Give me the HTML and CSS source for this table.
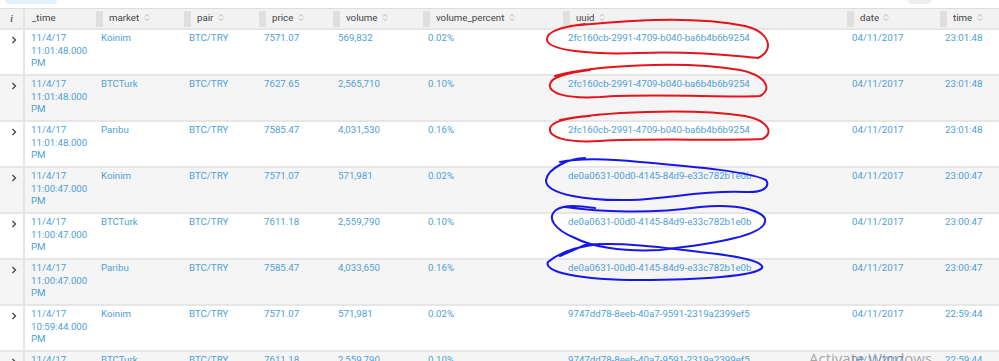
FILE: index.html
```html
<!DOCTYPE html>
<html lang="en">
<head>
    <meta charset="UTF-8">
    <title>Search results</title>
    <link rel="stylesheet" href="styles.css">
</head>
<body>
    <div class="toolbar">
        <span class="tab-active"></span>
        <span class="tab-btn"></span>
    </div>

    <table class="results">
        <colgroup>
            <col style="width:25px">
            <col style="width:71px">
            <col style="width:88px">
            <col style="width:75px">
            <col style="width:74px">
            <col style="width:90px">
            <col style="width:140px">
            <col style="width:284px">
            <col style="width:93px">
            <col style="width:59px">
        </colgroup>
        <thead>
            <tr>
                <th class="col-info">i</th>
                <th class="col-time">_time</th>
                <th>market <svg class="sort" viewBox="0 0 6 9"><path d="M1 3.5L3 1.5L5 3.5M1 5.5L3 7.5L5 5.5"/></svg></th>
                <th>pair <svg class="sort" viewBox="0 0 6 9"><path d="M1 3.5L3 1.5L5 3.5M1 5.5L3 7.5L5 5.5"/></svg></th>
                <th>price <svg class="sort" viewBox="0 0 6 9"><path d="M1 3.5L3 1.5L5 3.5M1 5.5L3 7.5L5 5.5"/></svg></th>
                <th>volume <svg class="sort" viewBox="0 0 6 9"><path d="M1 3.5L3 1.5L5 3.5M1 5.5L3 7.5L5 5.5"/></svg></th>
                <th>volume_percent <svg class="sort" viewBox="0 0 6 9"><path d="M1 3.5L3 1.5L5 3.5M1 5.5L3 7.5L5 5.5"/></svg></th>
                <th>uuid <svg class="sort" viewBox="0 0 6 9"><path d="M1 3.5L3 1.5L5 3.5M1 5.5L3 7.5L5 5.5"/></svg></th>
                <th>date <svg class="sort" viewBox="0 0 6 9"><path d="M1 3.5L3 1.5L5 3.5M1 5.5L3 7.5L5 5.5"/></svg></th>
                <th>time <svg class="sort" viewBox="0 0 6 9"><path d="M1 3.5L3 1.5L5 3.5M1 5.5L3 7.5L5 5.5"/></svg></th>
            </tr>
        </thead>
        <tbody>
            <tr>
                <td class="col-info"><svg class="expand" viewBox="0 0 6 8"><path d="M1.5 1L4.5 4L1.5 7"/></svg></td>
                <td class="col-time">11/4/17 11:01:48.000 PM</td>
                <td>Koinim</td><td>BTC/TRY</td><td>7571.07</td><td>569,832</td><td>0.02%</td>
                <td>2fc160cb-2991-4709-b040-ba6b4b6b9254</td><td>04/11/2017</td><td>23:01:48</td>
            </tr>
            <tr>
                <td class="col-info"><svg class="expand" viewBox="0 0 6 8"><path d="M1.5 1L4.5 4L1.5 7"/></svg></td>
                <td class="col-time">11/4/17 11:01:48.000 PM</td>
                <td>BTCTurk</td><td>BTC/TRY</td><td>7627.65</td><td>2,565,710</td><td>0.10%</td>
                <td>2fc160cb-2991-4709-b040-ba6b4b6b9254</td><td>04/11/2017</td><td>23:01:48</td>
            </tr>
            <tr>
                <td class="col-info"><svg class="expand" viewBox="0 0 6 8"><path d="M1.5 1L4.5 4L1.5 7"/></svg></td>
                <td class="col-time">11/4/17 11:01:48.000 PM</td>
                <td>Paribu</td><td>BTC/TRY</td><td>7585.47</td><td>4,031,530</td><td>0.16%</td>
                <td>2fc160cb-2991-4709-b040-ba6b4b6b9254</td><td>04/11/2017</td><td>23:01:48</td>
            </tr>
            <tr>
                <td class="col-info"><svg class="expand" viewBox="0 0 6 8"><path d="M1.5 1L4.5 4L1.5 7"/></svg></td>
                <td class="col-time">11/4/17 11:00:47.000 PM</td>
                <td>Koinim</td><td>BTC/TRY</td><td>7571.07</td><td>571,981</td><td>0.02%</td>
                <td>de0a0631-00d0-4145-84d9-e33c782b1e0b</td><td>04/11/2017</td><td>23:00:47</td>
            </tr>
            <tr>
                <td class="col-info"><svg class="expand" viewBox="0 0 6 8"><path d="M1.5 1L4.5 4L1.5 7"/></svg></td>
                <td class="col-time">11/4/17 11:00:47.000 PM</td>
                <td>BTCTurk</td><td>BTC/TRY</td><td>7611.18</td><td>2,559,790</td><td>0.10%</td>
                <td>de0a0631-00d0-4145-84d9-e33c782b1e0b</td><td>04/11/2017</td><td>23:00:47</td>
            </tr>
            <tr>
                <td class="col-info"><svg class="expand" viewBox="0 0 6 8"><path d="M1.5 1L4.5 4L1.5 7"/></svg></td>
                <td class="col-time">11/4/17 11:00:47.000 PM</td>
                <td>Paribu</td><td>BTC/TRY</td><td>7585.47</td><td>4,033,650</td><td>0.16%</td>
                <td>de0a0631-00d0-4145-84d9-e33c782b1e0b</td><td>04/11/2017</td><td>23:00:47</td>
            </tr>
            <tr>
                <td class="col-info"><svg class="expand" viewBox="0 0 6 8"><path d="M1.5 1L4.5 4L1.5 7"/></svg></td>
                <td class="col-time">11/4/17 10:59:44.000 PM</td>
                <td>Koinim</td><td>BTC/TRY</td><td>7571.07</td><td>571,981</td><td>0.02%</td>
                <td>9747dd78-8eeb-40a7-9591-2319a2399ef5</td><td>04/11/2017</td><td>22:59:44</td>
            </tr>
            <tr>
                <td class="col-info"><svg class="expand" viewBox="0 0 6 8"><path d="M1.5 1L4.5 4L1.5 7"/></svg></td>
                <td class="col-time">11/4/17 10:59:44.000 PM</td>
                <td>BTCTurk</td><td>BTC/TRY</td><td>7611.18</td><td>2,559,790</td><td>0.10%</td>
                <td>9747dd78-8eeb-40a7-9591-2319a2399ef5</td><td>04/11/2017</td><td>22:59:44</td>
            </tr>
        </tbody>
    </table>

    <!-- hand-drawn markup over the uuid column -->
    <svg class="scribbles" viewBox="0 0 999 361">
        <g class="red">
            <path d="M570 26C620 21 690 15 745 26C770 32 775 50 758 58C735 56 700 51 640 53C590 55 548 50 547 40C546 32 560 27 585 24"/>
            <path d="M555 76C590 66 680 60 740 70C768 76 772 90 760 96C730 98 650 93 600 97C565 99 548 93 550 84C552 77 565 73 590 70"/>
            <path d="M560 120C600 112 690 108 745 116C770 121 774 134 762 139C720 141 650 138 600 141C565 143 548 137 550 128C552 122 565 118 590 116"/>
        </g>
        <g class="blue">
            <path d="M585 158C570 158 548 168 546 180C545 195 590 201 630 200C670 199 700 190 745 192C765 193 770 186 766 180C750 172 700 167 640 162C610 159 580 158 560 162"/>
            <path d="M565 207C600 212 650 214 700 207C740 203 768 212 765 222C762 235 720 243 660 250C620 252 590 246 575 238C555 230 546 218 556 210C565 204 580 206 595 208"/>
            <path d="M600 244C580 246 560 252 548 262C543 272 580 280 640 280C700 280 755 276 762 268C765 262 740 256 700 252C660 247 620 242 585 245L560 256"/>
        </g>
    </svg>

    <div class="watermark">Activate Windows</div>
</body>
</html>
```

FILE: styles.css
```css
* {
    box-sizing: border-box;
}

body {
    margin: 0;
    height: 361px;
    overflow: hidden;
    position: relative;
    background: #fff;
    font-family: Roboto, 'Liberation Sans', sans-serif;
    font-size: 9.7px;
    line-height: 12.5px;
}

.toolbar {
    display: flex;
    height: 8px;
}

.tab-active {
    margin-left: 5px;
    width: 52px;
    height: 4px;
    background: #e3effa;
    border-radius: 0 0 4px 4px;
}

.tab-btn {
    margin-left: auto;
    margin-right: 68px;
    width: 23px;
    height: 4px;
    background: #eeeeee;
    border-radius: 0 0 4px 4px;
}

.results {
    border-collapse: separate;
    border-spacing: 0;
    table-layout: fixed;
    width: 999px;
}

.results th {
    height: 20px;
    padding: 0 0 0 13px;
    border-top: 1px solid #dddddd;
    background-color: #f2f2f2;
    background-image: linear-gradient(#dfdfdf, #dfdfdf);
    background-repeat: no-repeat;
    background-position: 0 2px;
    background-size: 7px 16px;
    color: #444;
    font-weight: normal;
    text-align: left;
    white-space: nowrap;
    vertical-align: middle;
}

.results th.col-info,
.results th.col-time {
    background-image: none;
}

.results th.col-info {
    padding: 0;
    text-align: center;
    font-style: italic;
    font-family: 'Liberation Serif', serif;
    font-size: 11px;
    color: #333;
}

.results th.col-time {
    padding-left: 7px;
}

.sort {
    width: 6px;
    height: 9px;
    margin-left: 2px;
    vertical-align: -1px;
}

.sort path {
    fill: none;
    stroke: #b5b5b5;
    stroke-width: 1;
}

.results td {
    height: 46px;
    padding: 2px 4px 0 5px;
    border-top: 2px solid #e6e6e6;
    vertical-align: top;
    color: #4f9fd5;
}

.results tbody tr:nth-child(even) td {
    background: #f5f5f5;
}

.results .col-info {
    border-right: 2px solid #e4e4e4;
}

.results td.col-info {
    padding: 6px 0 0 11px;
}

.results td.col-time {
    padding-left: 6px;
    padding-right: 2px;
}

.expand {
    display: block;
    width: 6px;
    height: 8px;
}

.expand path {
    fill: none;
    stroke: #444;
    stroke-width: 1.3;
}

.scribbles {
    position: absolute;
    top: 0;
    left: 0;
    width: 999px;
    height: 361px;
    pointer-events: none;
}

.scribbles path {
    fill: none;
    stroke-width: 2;
    stroke-linecap: round;
    stroke-linejoin: round;
}

.scribbles .red path {
    stroke: #e3141b;
}

.scribbles .blue path {
    stroke: #1717e8;
}

.watermark {
    position: absolute;
    left: 809px;
    top: 348px;
    font-family: 'Open Sans', sans-serif;
    font-size: 15px;
    line-height: 20px;
    color: rgba(110, 110, 110, 0.6);
    white-space: nowrap;
}
```
